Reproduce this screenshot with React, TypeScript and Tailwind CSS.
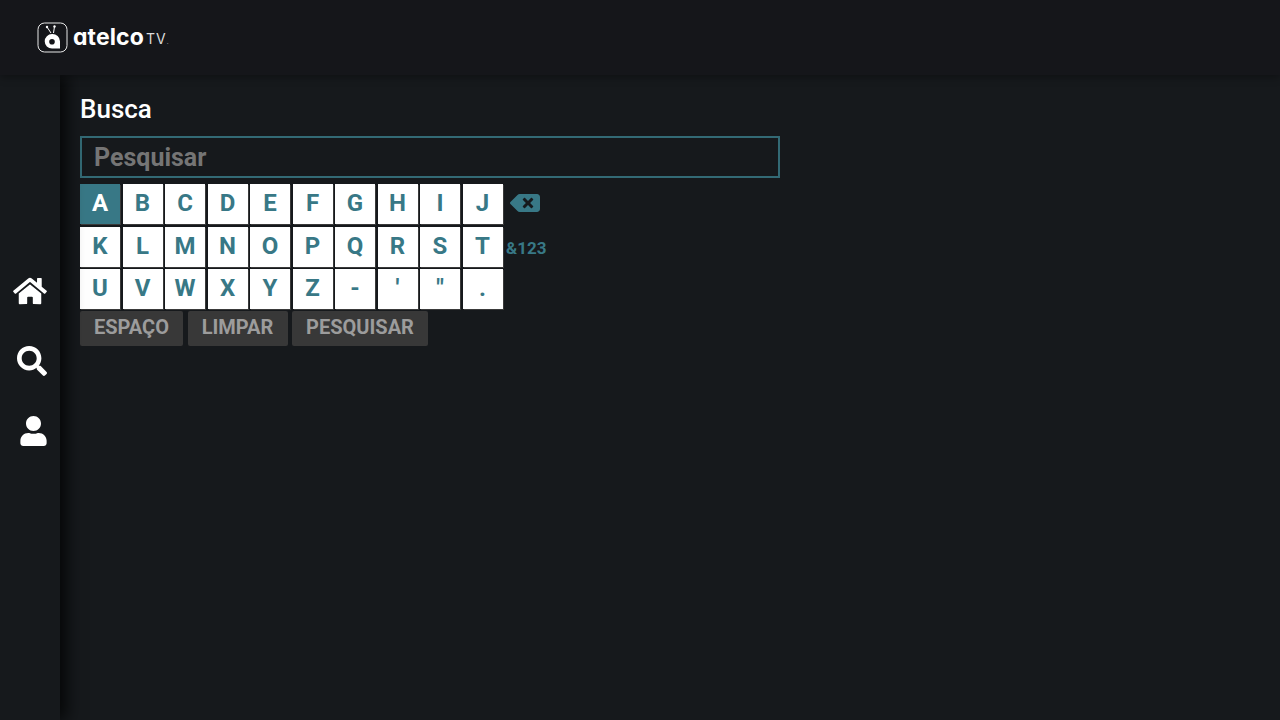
import React from 'react';
import { FaHome, FaSearch, FaUser, FaBackspace } from 'react-icons/fa';

const rows = [
  ['A', 'B', 'C', 'D', 'E', 'F', 'G', 'H', 'I', 'J'],
  ['K', 'L', 'M', 'N', 'O', 'P', 'Q', 'R', 'S', 'T'],
  ['U', 'V', 'W', 'X', 'Y', 'Z', '-', "'", '"', '.'],
];

const Logo: React.FC = () => (
  <div className="flex items-center">
    <svg width="31" height="31" viewBox="0 0 31 31" fill="none">
      <rect x="1" y="1" width="29" height="29" rx="6.5" stroke="#e8e8e8" strokeWidth="1" />
      <path d="M10 5 L14 11 M17.5 4.5 L16.5 11" stroke="#fff" strokeWidth="1" />
      <circle cx="10" cy="5" r="1.2" fill="#fff" />
      <circle cx="17.5" cy="4.5" r="1.2" fill="#fff" />
      <path d="M15 12 a7.3 7.3 0 1 0 0 14.6 h8 v-7.3 a7.6 7.3 0 0 0 -8 -7.3 z M15 17 a2.8 2.8 0 1 1 0 5.6 a2.8 2.8 0 0 1 0 -5.6 z" fill="#fff" fillRule="evenodd" />
    </svg>
    <span className="ml-[5px] mt-[1px] text-[23px] leading-none font-bold text-white tracking-[0.1px] font-['Inter',sans-serif] [font-feature-settings:'cv11']">atelco</span>
    <span className="ml-[2px] mt-[4px] text-[14px] leading-none text-[#dcdcdc] tracking-[1px] font-['Inter',sans-serif]">TV<span className="text-[8px] text-[#888]">.</span></span>
  </div>
);

const App: React.FC = () => {
  return (
    <div className="w-[1280px] h-[720px] overflow-hidden flex flex-col bg-[#16191c] font-['Roboto',sans-serif]">
      <header className="h-[75px] shrink-0 z-20 flex items-center pl-[37px] pb-[1px] bg-[#15161a] shadow-[0_2px_8px_rgba(0,0,0,0.35)]">
        <Logo />
      </header>
      <div className="flex flex-1 min-h-0">
        <nav className="w-[60px] shrink-0 z-10 flex flex-col items-center justify-center gap-[40px] pb-[74px] text-white bg-[#16191c] shadow-[6px_0_16px_rgba(0,0,0,0.8)]">
          <FaHome className="w-[34px] h-[30px]" />
          <FaSearch className="w-[32px] h-[30px] ml-[4px]" />
          <FaUser className="w-[27px] h-[30px] ml-[7px]" />
        </nav>
        <main className="flex-1 pl-[20px] pt-[18px]">
          <h1 className="text-[26px] leading-[32px] font-medium text-white">Busca</h1>
          <div className="mt-[11px] w-[700px] h-[42px] border-2 border-[#336a75] flex items-center pl-[12px] pt-[1px]">
            <span className="text-[25px] font-bold text-[#757575]">Pesquisar</span>
          </div>
          <div className="mt-[6px] flex flex-col gap-[2.5px]">
            {rows.map((row, r) => (
              <div key={r} className="flex items-center gap-[2.5px]">
                {row.map((k) => (
                  <div
                    key={k}
                    className={
                      k === 'A'
                        ? 'w-[40px] h-[40px] pb-[2px] flex items-center justify-center text-[24px] font-bold bg-[#387886] text-white shadow-[1px_1px_0_#3a3a3a]'
                        : 'w-[40px] h-[40px] pb-[2px] flex items-center justify-center text-[24px] font-bold bg-white text-[#387886] shadow-[1px_1px_0_#3a3a3a]'
                    }
                  >
                    {k}
                  </div>
                ))}
                {r === 0 && <FaBackspace className="ml-[5px] mb-[2px] w-[30px] h-[24px] text-[#387886]" />}
                {r === 1 && <span className="ml-[1px] mt-[5px] text-[17px] font-bold text-[#387886]">&amp;123</span>}
              </div>
            ))}
          </div>
          <div className="mt-[2px] flex gap-[4.5px]">
            <div className="w-[103px] h-[35px] pb-[3px] flex items-center justify-center rounded-[2px] text-[20px] font-bold bg-[#383838] text-[#9c9c9c]">ESPAÇO</div>
            <div className="w-[100px] h-[35px] pb-[3px] flex items-center justify-center rounded-[2px] text-[20px] font-bold bg-[#383838] text-[#9c9c9c]">LIMPAR</div>
            <div className="w-[136px] h-[35px] pb-[3px] flex items-center justify-center rounded-[2px] text-[20px] font-bold bg-[#383838] text-[#9c9c9c]">PESQUISAR</div>
          </div>
        </main>
      </div>
    </div>
  );
};

export default App;
